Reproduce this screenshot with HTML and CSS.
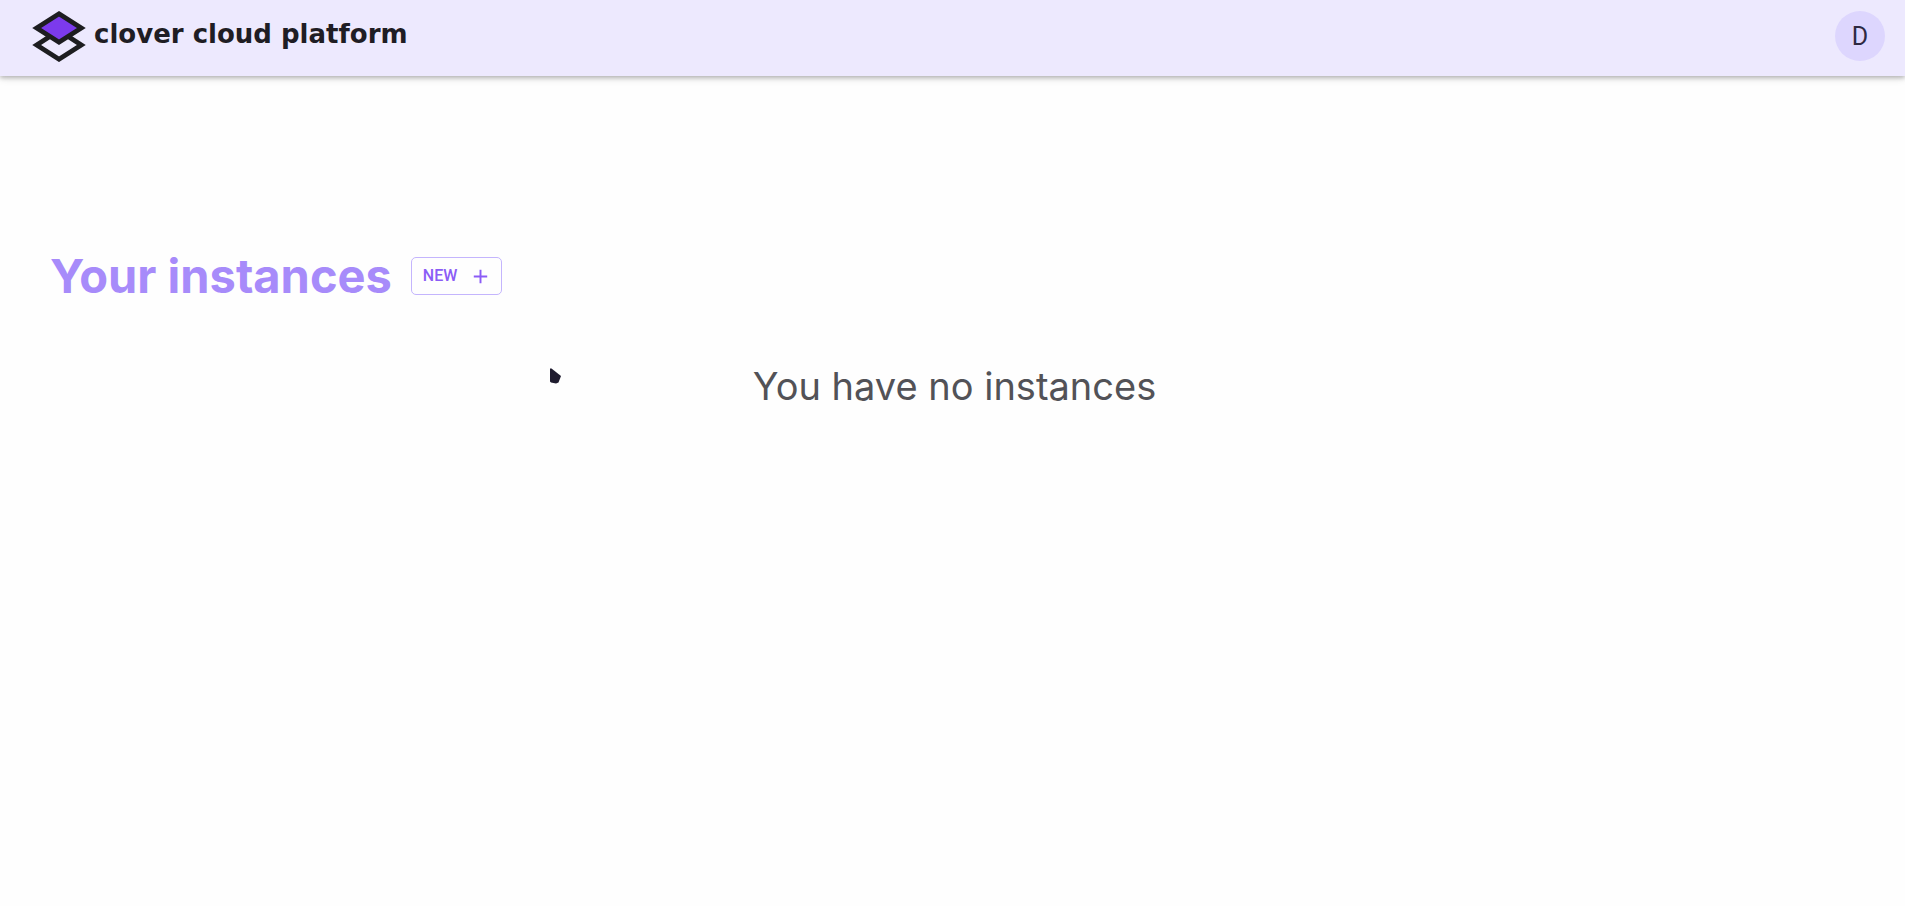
FILE: index.html
```html
<!DOCTYPE html>
<html lang="en">
<head>
<meta charset="utf-8">
<meta name="viewport" content="width=device-width, initial-scale=1">
<title>clover cloud platform</title>
<link rel="stylesheet" href="styles.css">
</head>
<body>
<header class="topbar">
  <a class="brand" href="#">
    <svg class="brand-mark" viewBox="0 0 54 52" aria-hidden="true">
      <path class="layer" d="M27 20.600L49.300 35L27 49.200L4.700 35Z"/>
      <path class="layer layer-top" d="M27 3.800L49.300 18L27 32.200L4.700 18Z"/>
    </svg>
    <span class="brand-name">clover cloud platform</span>
  </a>
  <button class="avatar" type="button" aria-label="Account D">D</button>
</header>
<main class="page">
  <div class="heading">
    <h1 class="title">Your instances</h1>
    <button class="new-button" type="button">NEW
      <svg class="plus" viewBox="0 0 24 24" aria-hidden="true"><path d="M19 13h-6v6h-2v-6H5v-2h6V5h2v6h6z"/></svg>
    </button>
  </div>
  <p class="empty">You have no instances</p>
</main>
<svg class="pointer" viewBox="0 0 12 16" aria-hidden="true"><path d="M0 0.500L1.500 0.500L11 8L8.500 14.500L6 15.500L1 14.500L0 13.500Z"/></svg>
</body>
</html>
```
FILE: styles.css
```css
* {
  box-sizing: border-box;
}

body {
  margin: 0;
  min-height: 100vh;
  background: #fefefe;
  font-family: Inter, "Liberation Sans", sans-serif;
}

.topbar {
  display: flex;
  align-items: center;
  justify-content: space-between;
  height: 76px;
  padding: 0 20px 4px 32px;
  background: #ede9fe;
  box-shadow: 0 2px 4px rgba(0, 0, 0, 0.2), 0 2px 8px rgba(0, 0, 0, 0.14);
}

.brand {
  display: flex;
  align-items: center;
  gap: 8px;
  color: #1f1d24;
  text-decoration: none;
}

.brand-mark {
  width: 54px;
  height: 52px;
}

.layer {
  fill: none;
  stroke: #1d1d20;
  stroke-width: 4.800;
}

.layer-top {
  fill: #7c3aed;
}

.brand-name {
  padding-bottom: 4px;
  font-family: "DejaVu Sans", sans-serif;
  font-size: 26px;
  font-weight: 700;
  line-height: 32px;
}

.avatar {
  width: 50px;
  height: 50px;
  padding: 0;
  border: 0;
  border-radius: 50%;
  background: #ddd6fe;
  color: #2e2942;
  font: 25px/52px Roboto, sans-serif;
}

.page {
  padding: 168px 46px 48px 50px;
}

.heading {
  display: flex;
  align-items: center;
  gap: 19px;
}

.title {
  margin: 0;
  color: #a78bfa;
  font-size: 47px;
  font-weight: 700;
  line-height: 64px;
}

.new-button {
  display: flex;
  align-items: center;
  justify-content: space-between;
  gap: 12px;
  height: 38px;
  padding: 0 9px 0 11px;
  border: 1px solid #c4b5fd;
  border-radius: 5px;
  background: transparent;
  color: #8b5cf6;
  font: 500 16px/24px Roboto, sans-serif;
}

.plus {
  width: 23px;
  height: 23px;
  fill: currentColor;
}

.empty {
  margin: 54px 0 0;
  color: #525257;
  font-size: 38px;
  line-height: 48px;
  text-align: center;
}

.pointer {
  position: absolute;
  top: 368px;
  left: 550px;
  width: 12px;
  height: 16px;
  fill: #1e1b2e;
}
```
